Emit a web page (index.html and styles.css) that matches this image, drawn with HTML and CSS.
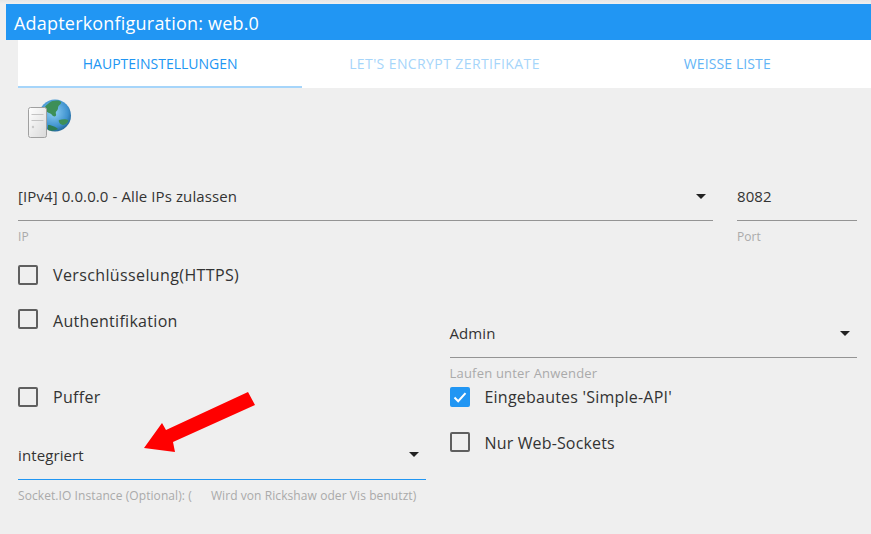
FILE: index.html
```html
<!DOCTYPE html>
<html lang="de">
<head>
<meta charset="utf-8">
<title>Adapterkonfiguration</title>
<link rel="stylesheet" href="styles.css">
</head>
<body>
<header class="title">Adapterkonfiguration: web.0</header>
<nav class="tabs">
  <div class="tab active">HAUPTEINSTELLUNGEN</div>
  <div class="tab disabled">LET'S ENCRYPT ZERTIFIKATE</div>
  <div class="tab muted">WEISSE LISTE</div>
</nav>
<main class="content">
  <svg class="logo" width="48" height="44" viewBox="0 0 48 44">
    <defs>
      <radialGradient id="sea" cx="0.45" cy="0.4" r="0.65">
        <stop offset="0" stop-color="#8fd0f5"/><stop offset="0.7" stop-color="#3f92cf"/><stop offset="1" stop-color="#1c5c8c"/>
      </radialGradient>
      <linearGradient id="box" x1="0" y1="0" x2="1" y2="1">
        <stop offset="0" stop-color="#ffffff"/><stop offset="1" stop-color="#d9d9d9"/>
      </linearGradient>
      <filter id="soft"><feGaussianBlur stdDeviation="0.4"/></filter>
    </defs>
    <g filter="url(#soft)">
      <circle cx="32" cy="19.500" r="16" fill="url(#sea)"/>
      <path d="M26 7c4-3 10-3 12-1 1 2-3 3-3 6s-3 3-2 6-3 3-4 1-5-2-7-5 2-5 4-7z" fill="#3c8f58"/>
      <path d="M36 24c3-1 8-1 9 0s-2 5-5 5-5-4-4-5z" fill="#3c8f58"/>
      <path d="M25 29c3 0 8 2 10 4-3 2-8 2-10 1z" fill="#2f7d52"/>
      <rect x="5.500" y="11.500" width="18" height="30" rx="2" fill="url(#box)" stroke="#a0a0a0"/>
      <path d="M8.500 18.500h12M8.500 24.500h12" stroke="#c4c4c4"/>
      <circle cx="10" cy="31" r="1.200" fill="#c8c8c8"/>
    </g>
  </svg>
  <div class="row-top">
    <div class="field grow">
      <div class="control"><span>[IPv4] 0.0.0.0 - Alle IPs zulassen</span><i class="caret"></i></div>
      <div class="hint">IP</div>
    </div>
    <div class="field port">
      <div class="control"><span>8082</span></div>
      <div class="hint">Port</div>
    </div>
  </div>
  <div class="columns">
    <section class="col">
      <label class="check first"><i class="box"></i>Verschlüsselung(HTTPS)</label>
      <label class="check auth"><i class="box"></i><span class="low">Authentifikation</span></label>
      <label class="check puffer"><i class="box"></i>Puffer</label>
      <div class="field socket">
        <div class="control focus"><span>integriert</span><i class="caret"></i></div>
        <div class="hint">Socket.IO Instance (Optional): (<span class="gap">Wird von Rickshaw oder Vis benutzt)</span></div>
      </div>
    </section>
    <section class="col right">
      <div class="field admin">
        <div class="control"><span>Admin</span><i class="caret"></i></div>
        <div class="hint">Laufen unter Anwender</div>
      </div>
      <label class="check api"><i class="box on"><svg width="20" height="20" viewBox="0 0 20 20"><path d="M4.500 10.500l3.700 3.700 7.300-8" fill="none" stroke="#fff" stroke-width="2"/></svg></i>Eingebautes 'Simple-API'</label>
      <label class="check sockets"><i class="box"></i><span class="low">Nur Web-Sockets</span></label>
    </section>
  </div>
</main>
<svg class="arrow" width="120" height="70" viewBox="0 0 120 70"><path d="M105 3L112 16 30 53 32 63 1 59 19 34 23 41z" fill="#f00"/></svg>
</body>
</html>
```
FILE: styles.css
```css
* { box-sizing: border-box; }
html, body { margin: 0; height: 100%; }
body {
  background: linear-gradient(#e6e6e6, #efefef 4px);
  font-family: "Open Sans", "Noto Sans", sans-serif;
  color: #333;
  font-size: 15px;
  letter-spacing: 0.1px;
  overflow: hidden;
  padding-top: 4px;
  position: relative;
}
.title {
  margin-left: 6px;
  height: 36px;
  background: #2196f3;
  color: #fff;
  font-size: 18px;
  letter-spacing: 0.2px;
  line-height: 38px;
  padding-left: 8px;
}
.tabs {
  margin-left: 18px;
  height: 48px;
  background: #fff;
  display: grid;
  grid-template-columns: repeat(3, 1fr);
  grid-auto-rows: 48px;
}
.tab {
  text-align: center;
  font-size: 14px;
  letter-spacing: 0;
  line-height: 48px;
  color: #2196f3;
}
.tab.active { border-bottom: 2px solid #a6d5fa; }
.tab.disabled { color: #a6d5fa; letter-spacing: 0.4px; }
.tab.muted { color: #64b5f6; letter-spacing: 0.1px; padding-right: 3px; }
.content { padding: 8px 14px 0 18px; }
.logo { display: block; margin-left: 5px; }
.row-top { display: flex; gap: 24px; margin-top: 45px; }
.grow { flex: 1; }
.port { width: 120px; }
.control {
  height: 36px;
  border-bottom: 1px solid #949494;
  display: flex;
  align-items: center;
  justify-content: space-between;
  padding-bottom: 13px;
}
.control.focus { border-bottom-color: #2196f3; padding-bottom: 14px; }
.caret {
  width: 0;
  height: 0;
  border: 5px solid transparent;
  border-top-color: #222;
  border-bottom: 0;
  margin-right: 7px;
}
.hint { font-size: 12px; letter-spacing: 0.08px; color: #aaa; line-height: 15px; margin-top: 8px; }
.gap { margin-left: 19px; }
.columns { display: flex; gap: 24px; }
.col { flex: 1; min-width: 0; }
.check { display: flex; align-items: center; height: 20px; font-size: 16px; letter-spacing: 0.3px; }
.first { letter-spacing: 0.38px; }
.api { letter-spacing: 0.22px; }
.low { position: relative; top: 1px; }
.auth .low { top: 2px; }
.box {
  width: 20px;
  height: 20px;
  border: 2px solid #5f5f5f;
  border-radius: 2px;
  margin-right: 15px;
  flex: none;
}
.box.on { background: #2196f3; border: 0; }
.box svg { display: block; }
.first { margin-top: 21px; }
.auth { margin-top: 24px; }
.puffer { margin-top: 58px; }
.socket { margin-top: 37px; }
.admin { margin-top: 78px; }
.admin .hint { margin-top: 8px; font-size: 13px; letter-spacing: 0.2px; }
.api { margin-top: 6px; }
.sockets { margin-top: 25px; letter-spacing: 0.15px; }
.arrow { position: absolute; left: 143px; top: 389px; }
```
